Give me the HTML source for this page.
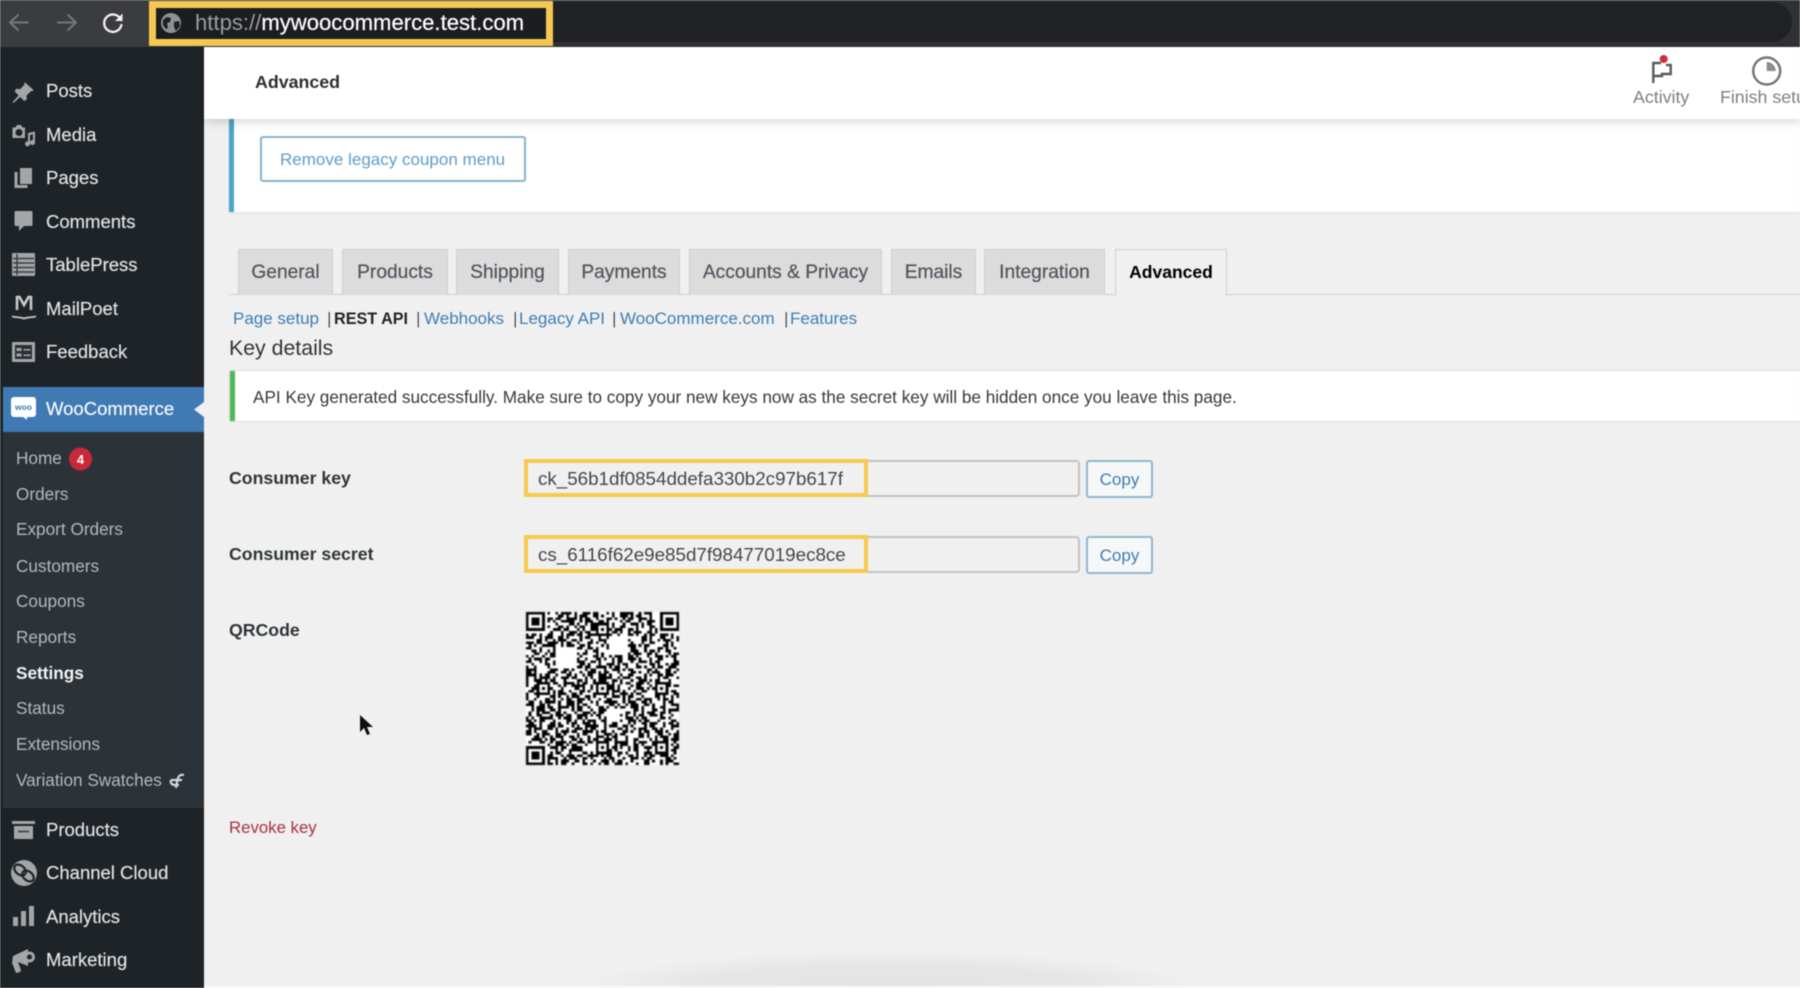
<!DOCTYPE html>
<html lang="en"><head><meta charset="utf-8"><title>Advanced</title>
<style>
html,body{margin:0;padding:0;background:#f0f0f0}
body{width:1800px;height:988px;overflow:hidden;position:relative;font-family:"Liberation Sans",sans-serif}
#p{position:absolute;left:0;top:0;width:1800px;height:988px;overflow:hidden;background:#f0f0f0;filter:blur(.6px)}
.b{position:absolute;box-sizing:border-box}
.t{position:absolute;white-space:nowrap;line-height:20px;height:20px}
.m{font-size:18.5px;color:#dfe1e3;left:46px;-webkit-text-stroke:.2px #dfe1e3}
.s{font-size:17.2px;color:#b3b8bc;left:16px}
.tab{position:absolute;top:249px;height:46px;box-sizing:border-box;background:#dcdcdd;border:1px solid #cfcfd1;border-bottom:0;text-align:center;line-height:45px;font-size:19.2px;color:#50575e;-webkit-text-stroke:.25px #50575e}
.l{font-size:17px;color:#3f7db3;top:309px}
.sep{font-size:17px;color:#50575e;top:309px}
.lab{font-size:17.7px;font-weight:bold;color:#2f3539;left:229px}
.copy{position:absolute;left:1086px;width:67px;height:38px;box-sizing:border-box;border:2px solid #8fb6d2;border-radius:3px;background:#f6f7f7;color:#3f7db3;font-size:17px;text-align:center;line-height:36px}
.q path{stroke:#000;stroke-width:1;fill:none}
.a{stroke-dasharray:2 1 1 3 2 2 1 1 4 1 1 2 3 1 2 3 1 1 1 2 5}
.c{stroke-dasharray:1 2 3 1 1 1 2 3 1 4 2 1 1 2 1 1 3 2 2 1 1 3}
.d{stroke-dasharray:3 2 1 1 2 1 1 2 2 3 1 1 3 1 2 2 4 1 1 1 2 2 1}
</style></head><body><div id="p">

<!-- browser chrome -->
<div class="b" style="left:0;top:0;width:1800px;height:47px;background:#303134"></div>
<div class="b" style="left:0;top:0;width:149px;height:47px;background:#3b3c3f"></div>
<div class="b" style="left:500px;top:2px;width:1292px;height:40px;border-radius:0 20px 20px 0;background:#202124"></div>
<svg class="b" style="left:0;top:0" width="150" height="47" fill="none" stroke-linecap="round" stroke-linejoin="round">
<path d="M28 22.5H11M18 15l-8 7.5 8 7.5" stroke="#75777a" stroke-width="2"/>
<path d="M58 22.5H75M68 15l8 7.5-8 7.5" stroke="#75777a" stroke-width="2"/>
<path d="M121 20a8.7 8.700 0 1 0 .4 5" stroke="#f1f1f1" stroke-width="2.300"/>
<path d="M122.500 13.500v7.500h-7.500z" fill="#f1f1f1"/>
</svg>
<div class="b" style="left:149px;top:1px;width:404px;height:45px;border:7px solid #f6c752;background:#1c1d21"></div>
<svg class="b" style="left:160px;top:12px" width="22" height="22"><circle cx="11" cy="11" r="10" fill="#8f9194"/><path d="M3 8l4-3 4 1-1 4-3 1 1 5-2 1-3-4zM14 10l5-1 1 5-4 5-2-4z" fill="#1c1d21"/></svg>
<div class="t" style="left:195px;top:13px;font-size:22.1px;line-height:20px;color:#fff;-webkit-text-stroke:.2px #fff"><span style="color:#9c9ea1;-webkit-text-stroke:0">https://</span>mywoocommerce.test.com</div>

<!-- sidebar -->
<div class="b" style="left:0;top:47px;width:204px;height:941px;background:#1d2327"></div>
<div class="b" style="left:3px;top:432px;width:201px;height:376px;background:#2c3338"></div>
<div class="b" style="left:3px;top:387px;width:201px;height:45px;background:#3f7ab5"></div>
<svg class="b" style="left:194px;top:402px" width="10" height="15"><path d="M10 0v15L0 7.500z" fill="#f0f0f0"/></svg>

<svg class="b" style="left:0;top:0" width="204" height="988">
<g fill="#a3a6a9">
<!-- pin -->
<path d="M24.500 82l9.500 8.500-3 .7-4.600 4.400.6 3.700-2.800 1.700-4-4-6.700 6-.9-.9 6-6.700-4-4 1.700-2.800 3.700.6 4.400-4.600z"/>
<!-- media -->
<path d="M12.500 127.500h3l1.500-2.500h4l1.500 2.500h2.500v10.500h-12.500zM19 129a3.500 3.500 0 1 0 .01 0z" fill-rule="evenodd"/>
<path d="M28 133l7-1.500v11a2.500 2.500 0 1 1-2-2.400v-5.800l-3 .7v8.800a2.500 2.500 0 1 1-2-2.400z"/>
<!-- pages -->
<path d="M20 168h12v16h-12z"/><path d="M14.500 172h3v13h10v3h-13z"/>
<!-- comments -->
<path d="M16 211h15a1.500 1.500 0 0 1 1.500 1.500v12a1.500 1.500 0 0 1-1.500 1.500h-7l-5 5v-5h-3a1.500 1.500 0 0 1-1.500-1.500v-12a1.500 1.500 0 0 1 1.500-1.500z"/>
<!-- tablepress -->
<rect x="12" y="253" width="23" height="23" rx="1"/>
<!-- feedback -->
<rect x="12" y="342" width="23" height="20" rx="1"/>
<!-- products -->
<rect x="12" y="821" width="23" height="3"/><path d="M14 826h19v13h-19z"/>
<!-- analytics -->
<rect x="13" y="917" width="5" height="9"/><rect x="21" y="911" width="5" height="15"/><rect x="29" y="906" width="5" height="20"/>
<!-- marketing -->
<path d="M13 956l15-7v17l-10-4 3 8-1 2-4 1-3.500-9-.5-.5z"/><circle cx="29.500" cy="957" r="5.500"/>
<!-- channel cloud -->
<circle cx="24" cy="873" r="13"/>
</g>
<g stroke="#3a3e42" stroke-width="1.500" fill="none"><path d="M13 258.500h21M13 263h21M13 267.500h21M13 272h21M17 254v21"/></g>
<path d="M15 345h17v14h-17z" fill="#2a2f33"/><path d="M16.500 348h5v3h-5zM16.500 353.500h5v3h-5zM23.500 349h7v1.500h-7zM23.500 354.500h7v1.500h-7z" fill="#a3a6a9"/>
<path d="M18 830.500h11v2h-11z" fill="#4c5054"/>
<circle cx="29.500" cy="957" r="2.500" fill="#1d2327"/>
<g fill="none" stroke="#1d2327" stroke-width="2.200"><ellipse cx="20" cy="870" rx="6.500" ry="4.500" transform="rotate(40 20 870)"/><ellipse cx="28" cy="876" rx="6.500" ry="4.500" transform="rotate(40 28 876)"/></g>
<!-- mailpoet -->
<path d="M17 310v-13h2.500l4.500 8 4.500-8h2.500v13" fill="none" stroke="#c7c9cb" stroke-width="2.600"/>
<path d="M12 316.500c5 1 8 .5 12 2 4-1.500 7-1 12-2" fill="none" stroke="#c7c9cb" stroke-width="1.800"/>
<!-- woo -->
<rect x="11" y="397" width="25" height="20" rx="3" fill="#fff"/><path d="M22 416h5v4z" fill="#fff"/>
<text x="23.500" y="410" font-family="Liberation Sans,sans-serif" font-size="8.500" font-weight="bold" fill="#3f7ab5" text-anchor="middle">woo</text>
<!-- home badge -->
<circle cx="80.500" cy="459" r="11.500" fill="#c8283a"/>
<text x="80.500" y="464" font-family="Liberation Sans,sans-serif" font-size="13" font-weight="bold" fill="#fff" text-anchor="middle">4</text>
<!-- swatch -->
<path d="M184 775c-5-1-6 2-7 7l-1 6M171 780h11M171 780c-1 3 1 5 4 5h4" fill="none" stroke="#d5d7d9" stroke-width="2.200"/>
</svg>

<div class="t m" style="top:81px">Posts</div>
<div class="t m" style="top:125px">Media</div>
<div class="t m" style="top:168px">Pages</div>
<div class="t m" style="top:212px">Comments</div>
<div class="t m" style="top:255px">TablePress</div>
<div class="t m" style="top:299px">MailPoet</div>
<div class="t m" style="top:342px">Feedback</div>
<div class="t m" style="top:399px;color:#fff">WooCommerce</div>
<div class="t s" style="top:448px">Home</div>
<div class="t s" style="top:484px">Orders</div>
<div class="t s" style="top:519px">Export Orders</div>
<div class="t s" style="top:556px">Customers</div>
<div class="t s" style="top:591px">Coupons</div>
<div class="t s" style="top:627px">Reports</div>
<div class="t s" style="top:663px;color:#f2f2f2;font-weight:bold">Settings</div>
<div class="t s" style="top:698px">Status</div>
<div class="t s" style="top:734px">Extensions</div>
<div class="t s" style="top:770px">Variation Swatches</div>
<div class="t m" style="top:820px">Products</div>
<div class="t m" style="top:863px">Channel Cloud</div>
<div class="t m" style="top:907px">Analytics</div>
<div class="t m" style="top:950px">Marketing</div>

<!-- top notice card -->
<div class="b" style="left:229px;top:119px;width:1571px;height:93px;background:#fff;border-left:5px solid #4ba5cb;box-shadow:0 1px 2px rgba(0,0,0,.08)"></div>
<div class="b" style="left:260px;top:136px;width:266px;height:46px;border:2px solid #85b3d0;border-radius:3px;background:#fff"></div>
<div class="t" style="left:280px;top:150px;font-size:17.03px;color:#5f9cc6">Remove legacy coupon menu</div>

<!-- header -->
<div class="b" style="left:204px;top:47px;width:1596px;height:72px;background:#fff;box-shadow:0 3px 9px rgba(0,0,0,.16)"></div>
<div class="t" style="left:255px;top:72px;font-size:17.8px;font-weight:bold;color:#2c2f33">Advanced</div>
<svg class="b" style="left:1640px;top:50px" width="160" height="42" fill="none">
<path d="M13.300 33V13H21M13.300 26H22V24H30.700V15H26" stroke="#555b60" stroke-width="2.400"/>
<circle cx="23.700" cy="9" r="4" fill="#cf2e3e"/>
<circle cx="126.700" cy="21" r="13.500" stroke="#707478" stroke-width="2.400"/>
<path d="M126.700 12a9 9 0 0 1 9 9h-9z" fill="#8a8d91"/>
</svg>
<div class="t" style="left:1633px;top:87px;font-size:17.8px;color:#7b7f83">Activity</div>
<div class="t" style="left:1720px;top:87px;font-size:17.8px;color:#7b7f83">Finish setup</div>

<!-- tabs -->
<div class="b" style="left:229px;top:294px;width:1571px;height:1px;background:#cfcfd1"></div>
<div class="tab" style="left:238px;width:95px">General</div>
<div class="tab" style="left:342px;width:106px">Products</div>
<div class="tab" style="left:456px;width:103px">Shipping</div>
<div class="tab" style="left:568px;width:112px">Payments</div>
<div class="tab" style="left:689px;width:193px">Accounts &amp; Privacy</div>
<div class="tab" style="left:891px;width:85px">Emails</div>
<div class="tab" style="left:984px;width:121px">Integration</div>
<div class="tab" style="left:1115px;width:112px;height:47px;background:#f0f0f0;color:#000;-webkit-text-stroke:0;font-weight:bold;font-size:17.5px;border-color:#cfcfd1">Advanced</div>

<!-- subnav -->
<div class="t l" style="left:233px">Page setup</div>
<div class="t sep" style="left:327px">|</div>
<div class="t" style="left:334px;top:309px;font-size:16.2px;font-weight:bold;color:#1d2327">REST API</div>
<div class="t sep" style="left:416px">|</div>
<div class="t l" style="left:424px">Webhooks</div>
<div class="t sep" style="left:513px">|</div>
<div class="t l" style="left:519px">Legacy API</div>
<div class="t sep" style="left:612px">|</div>
<div class="t l" style="left:620px">WooCommerce.com</div>
<div class="t sep" style="left:784px">|</div>
<div class="t l" style="left:790px">Features</div>

<div class="t" style="left:229px;top:338px;font-size:21.3px;color:#2f3539">Key details</div>

<!-- success notice -->
<div class="b" style="left:230px;top:371px;width:1570px;height:50px;background:#fff;border-left:5px solid #4fb958;box-shadow:0 0 2px rgba(0,0,0,.22)"></div>
<div class="t" style="left:253px;top:387px;font-size:17.18px;color:#34393e">API Key generated successfully. Make sure to copy your new keys now as the secret key will be hidden once you leave this page.</div>

<!-- fields -->
<div class="t lab" style="top:468px">Consumer key</div>
<div class="b" style="left:860px;top:460px;width:220px;height:37px;border:2px solid #c3c3c4;border-left:0;border-radius:0 4px 4px 0;background:#f0f0f0"></div>
<div class="b" style="left:524px;top:459px;width:344px;height:38px;border:4px solid #f7c94f;background:#f0f0f0"></div>
<div class="t" style="left:538px;top:469px;width:308px;overflow:hidden;font-size:18.8px;color:#43484d">ck_56b1df0854ddefa330b2c97b617f</div>
<div class="copy" style="top:460px">Copy</div>

<div class="t lab" style="top:544px">Consumer secret</div>
<div class="b" style="left:860px;top:536px;width:220px;height:37px;border:2px solid #c3c3c4;border-left:0;border-radius:0 4px 4px 0;background:#f0f0f0"></div>
<div class="b" style="left:524px;top:535px;width:344px;height:38px;border:4px solid #f7c94f;background:#f0f0f0"></div>
<div class="t" style="left:538px;top:545px;width:308px;overflow:hidden;font-size:18.8px;color:#43484d">cs_6116f62e9e85d7f98477019ec8ce</div>
<div class="copy" style="top:536px">Copy</div>

<div class="t lab" style="top:620px">QRCode</div>

<!-- QR -->
<svg class="b q" style="left:526px;top:612px;filter:blur(.5px)" width="153" height="153" viewBox="0 0 57 57" shape-rendering="crispEdges">
<rect width="57" height="57" fill="#fff"/>
<path class="a" d="M0 .5H57"/><path class="c" d="M0 1.500H57" stroke-dashoffset="7"/><path class="d" d="M0 2.500H57" stroke-dashoffset="13"/><path class="a" d="M0 3.500H57" stroke-dashoffset="22"/><path class="c" d="M0 4.500H57" stroke-dashoffset="3"/><path class="d" d="M0 5.500H57" stroke-dashoffset="31"/><path class="a" d="M0 6.500H57" stroke-dashoffset="11"/><path class="c" d="M0 7.500H57" stroke-dashoffset="26"/><path class="d" d="M0 8.500H57" stroke-dashoffset="5"/><path class="a" d="M0 9.500H57" stroke-dashoffset="37"/>
<path class="c" d="M0 10.500H57" stroke-dashoffset="15"/><path class="d" d="M0 11.500H57" stroke-dashoffset="20"/><path class="a" d="M0 12.500H57" stroke-dashoffset="29"/><path class="c" d="M0 13.500H57" stroke-dashoffset="9"/><path class="d" d="M0 14.500H57" stroke-dashoffset="41"/><path class="a" d="M0 15.500H57" stroke-dashoffset="4"/><path class="c" d="M0 16.500H57" stroke-dashoffset="33"/><path class="d" d="M0 17.500H57" stroke-dashoffset="17"/><path class="a" d="M0 18.500H57" stroke-dashoffset="25"/><path class="c" d="M0 19.500H57" stroke-dashoffset="12"/>
<path class="d" d="M0 20.500H57" stroke-dashoffset="2"/><path class="a" d="M0 21.500H57" stroke-dashoffset="35"/><path class="c" d="M0 22.500H57" stroke-dashoffset="19"/><path class="d" d="M0 23.500H57" stroke-dashoffset="28"/><path class="a" d="M0 24.500H57" stroke-dashoffset="8"/><path class="c" d="M0 25.500H57" stroke-dashoffset="39"/><path class="d" d="M0 26.500H57" stroke-dashoffset="14"/><path class="a" d="M0 27.500H57" stroke-dashoffset="18"/><path class="c" d="M0 28.500H57" stroke-dashoffset="1"/><path class="d" d="M0 29.500H57" stroke-dashoffset="23"/>
<path class="a" d="M0 30.500H57" stroke-dashoffset="32"/><path class="c" d="M0 31.500H57" stroke-dashoffset="10"/><path class="d" d="M0 32.500H57" stroke-dashoffset="36"/><path class="a" d="M0 33.500H57" stroke-dashoffset="6"/><path class="c" d="M0 34.500H57" stroke-dashoffset="27"/><path class="d" d="M0 35.500H57" stroke-dashoffset="16"/><path class="a" d="M0 36.500H57" stroke-dashoffset="40"/><path class="c" d="M0 37.500H57" stroke-dashoffset="21"/><path class="d" d="M0 38.500H57" stroke-dashoffset="9"/><path class="a" d="M0 39.500H57" stroke-dashoffset="30"/>
<path class="c" d="M0 40.500H57" stroke-dashoffset="4"/><path class="d" d="M0 41.500H57" stroke-dashoffset="34"/><path class="a" d="M0 42.500H57" stroke-dashoffset="13"/><path class="c" d="M0 43.500H57" stroke-dashoffset="24"/><path class="d" d="M0 44.500H57" stroke-dashoffset="7"/><path class="a" d="M0 45.500H57" stroke-dashoffset="38"/><path class="c" d="M0 46.500H57" stroke-dashoffset="16"/><path class="d" d="M0 47.500H57" stroke-dashoffset="26"/><path class="a" d="M0 48.500H57" stroke-dashoffset="2"/><path class="c" d="M0 49.500H57" stroke-dashoffset="31"/>
<path class="d" d="M0 50.500H57" stroke-dashoffset="11"/><path class="a" d="M0 51.500H57" stroke-dashoffset="19"/><path class="c" d="M0 52.500H57" stroke-dashoffset="37"/><path class="d" d="M0 53.500H57" stroke-dashoffset="5"/><path class="a" d="M0 54.500H57" stroke-dashoffset="28"/><path class="c" d="M0 55.500H57" stroke-dashoffset="14"/><path class="d" d="M0 56.500H57" stroke-dashoffset="22"/>
<g fill="#fff">
<rect x="11" y="13" width="8" height="8"/><rect x="31" y="9" width="7" height="7"/><rect x="30" y="36" width="5" height="5"/><rect x="0" y="0" width="8" height="8"/><rect x="49" y="0" width="8" height="8"/><rect x="0" y="49" width="8" height="8"/>
<rect x="4" y="20" width="4" height="3"/><rect x="22" y="50" width="4" height="2"/>
</g>
<g>
<rect x="0" y="0" width="7" height="7"/><rect x="50" y="0" width="7" height="7"/><rect x="0" y="50" width="7" height="7"/>
<rect x="4" y="26" width="5" height="5"/><rect x="26" y="26" width="5" height="5"/><rect x="48" y="26" width="5" height="5"/><rect x="26" y="4" width="5" height="5"/><rect x="26" y="48" width="5" height="5"/><rect x="48" y="48" width="5" height="5"/>
</g>
<g fill="#fff">
<rect x="1" y="1" width="5" height="5"/><rect x="51" y="1" width="5" height="5"/><rect x="1" y="51" width="5" height="5"/>
<rect x="5" y="27" width="3" height="3"/><rect x="27" y="27" width="3" height="3"/><rect x="49" y="27" width="3" height="3"/><rect x="27" y="5" width="3" height="3"/><rect x="27" y="49" width="3" height="3"/><rect x="49" y="49" width="3" height="3"/>
</g>
<g>
<rect x="2" y="2" width="3" height="3"/><rect x="52" y="2" width="3" height="3"/><rect x="2" y="52" width="3" height="3"/>
<rect x="6" y="28" width="1" height="1"/><rect x="28" y="28" width="1" height="1"/><rect x="50" y="28" width="1" height="1"/><rect x="28" y="6" width="1" height="1"/><rect x="28" y="50" width="1" height="1"/><rect x="50" y="50" width="1" height="1"/>
</g>
</svg>

<!-- cursor -->
<svg class="b" style="left:358px;top:714px" width="16" height="24"><path d="M2 1v17l4-4 3 7 3-1-3-7h6z" fill="#111"/></svg>

<div class="t" style="left:229px;top:818px;font-size:16.8px;color:#a8323e">Revoke key</div>

<!-- bottom shadow -->
<div class="b" style="left:560px;top:940px;width:660px;height:46px;overflow:hidden"><div style="position:absolute;left:30px;top:12px;width:600px;height:70px;border-radius:50%;background:radial-gradient(ellipse at center,#e3e3e3 0%,#e6e6e6 45%,rgba(240,240,240,0) 72%)"></div></div>
<div class="b" style="left:204px;top:986px;width:1596px;height:2px;background:#fafafa"></div>
</div></body></html>
